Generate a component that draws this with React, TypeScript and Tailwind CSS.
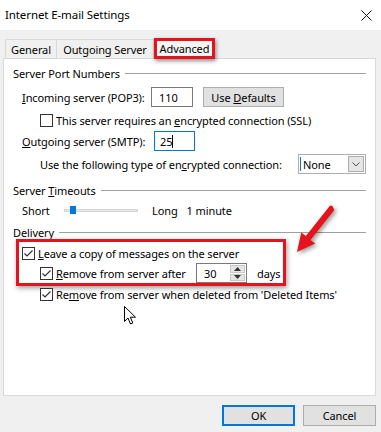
import React from 'react';

const font = { fontFamily: '"Noto Sans", "Liberation Sans", sans-serif' };

function Check({ checked }: { checked?: boolean }) {
  return (
    <span className="w-[13px] h-[13px] border border-[#333] bg-white flex items-center justify-center shrink-0">
      {checked && (
        <svg width="11" height="11" viewBox="0 0 11 11">
          <path d="M1.5 5.5 L4 8 L9.5 2.5" fill="none" stroke="#333" strokeWidth="1.2" />
        </svg>
      )}
    </span>
  );
}

function GroupHeading({ children }: { children: React.ReactNode }) {
  return (
    <div className="flex items-center h-[16px] pl-[9px] pr-[9px]">
      <span className="whitespace-nowrap">{children}</span>
      <div className="flex-1 h-px bg-[#a0a0a0] ml-[5px]" />
    </div>
  );
}

export default function App() {
  return (
    <div className="w-[381px] h-[432px] overflow-hidden relative text-[11px] tracking-[-0.1px] whitespace-nowrap text-black leading-none" style={font}>
      {/* ── Title bar ── */}
      <div className="h-[30px] bg-white flex items-center justify-between pl-[5px] pr-[9px]">
        <span className="text-[11.5px]">Internet E-mail Settings</span>
        <svg width="11" height="11" viewBox="0 0 11 11">
          <path d="M0.5 0.5 L10.5 10.5 M10.5 0.5 L0.5 10.5" stroke="#111" strokeWidth="1" />
        </svg>
      </div>

      <div className="h-[402px] bg-[#f0f0f0] flex flex-col">
        {/* ── Tabs ── */}
        <div className="flex items-end pl-[5px] h-[28px]">
          <div className="h-[19px] w-[52px] border border-b-0 border-[#d9d9d9] flex items-center justify-center">General</div>
          <div className="h-[19px] w-[97px] border border-b-0 border-l-0 border-[#d9d9d9] flex items-center justify-center">Outgoing Server</div>
          <div className="h-[21px] w-[61px] -mb-px border-[3px] border-[#e5141c] bg-[#f4f4f4] flex items-center justify-center shadow-[1px_2px_4px_rgba(0,0,0,0.45)] z-10">
            Advanced
          </div>
        </div>

        {/* ── Panel ── */}
        <div className="ml-[3px] w-[373px] h-[338px] border border-[#d9d9d9] bg-white flex flex-col">
          <div className="mt-[6px]">
            <GroupHeading>Server Port Numbers</GroupHeading>
          </div>

          <div className="mt-[6px] h-[20px] flex items-center pl-[18px]">
            <span className="w-[129px]"><u>I</u>ncoming server (POP3):</span>
            <div className="w-[42px] h-[20px] border border-[#7a7a7a] flex items-center pl-[7px]">110</div>
            <div className="ml-[10px] w-[81px] h-[20px] border border-[#adadad] bg-[#e1e1e1] flex items-center justify-center">
              Use&nbsp;<u>D</u>efaults
            </div>
          </div>

          <div className="mt-[7px] h-[13px] flex items-center pl-[36px]">
            <Check />
            <span className="ml-[3px]">This server requires an <u>e</u>ncrypted connection (SSL)</span>
          </div>

          <div className="mt-[4px] h-[20px] flex items-center pl-[18px]">
            <span className="w-[132px]"><u>O</u>utgoing server (SMTP):</span>
            <div className="w-[41px] h-[20px] border border-[#0078d7] flex items-center pl-[5px]">
              25<span className="w-px h-[13px] bg-black" />
            </div>
          </div>

          <div className="mt-[3px] h-[20px] flex items-center pl-[36px]">
            <span className="w-[258px]">Use the following type of en<u>c</u>rypted connection:</span>
            <div className="w-[68px] h-[20px] border border-[#adadad] flex items-center pl-[1px] pr-[1px]">
              <span className="w-px h-[14px] bg-[#0078d7]" />
              <span className="ml-[2px] flex-1">None</span>
              <div className="w-[16px] h-[16px] bg-[#e5e5e5] border border-[#adadad] flex items-center justify-center">
                <svg width="8" height="5" viewBox="0 0 8 5">
                  <path d="M0.5 0.5 L4 4 L7.5 0.5" fill="none" stroke="#555" strokeWidth="1" />
                </svg>
              </div>
            </div>
          </div>

          <div className="mt-[8px]">
            <GroupHeading>Server <u>T</u>imeouts</GroupHeading>
          </div>

          <div className="mt-[4px] h-[16px] flex items-center pl-[18px]">
            <span className="w-[42px]">Short</span>
            <div className="relative w-[74px] h-[3px] bg-[#e7e7e7] border border-[#d6d6d6]">
              <span className="absolute left-[5px] -top-[4px] w-[6px] h-[8px] bg-[#0078d7]" />
            </div>
            <span className="ml-[14px]">Long</span>
            <span className="ml-[9px]">1 minute</span>
          </div>

          <div className="mt-[6px] h-[15px]">
            <GroupHeading>Delivery</GroupHeading>
          </div>

          {/* red annotation box */}
          <div className="ml-[12px] w-[270px] h-[47px] border-[3px] border-[#e5141c] shadow-[1px_2px_5px_rgba(0,0,0,0.4)] flex flex-col">
            <div className="mt-[5px] h-[13px] flex items-center pl-[3px]">
              <Check checked />
              <span className="ml-[3px]"><u>L</u>eave a copy of messages on the server</span>
            </div>
            <div className="mt-[3px] h-[20px] flex items-center pl-[21px]">
              <Check checked />
              <span className="ml-[3px] w-[140px]"><u>R</u>emove from server after</span>
              <div className="w-[51px] h-[20px] border border-[#7a7a7a] flex items-center">
                <span className="flex-1 pl-[7px]">30</span>
                <div className="w-[15px] h-[16px] mr-[1px] flex flex-col gap-px">
                  <div className="flex-1 bg-[#e5e5e5] border border-[#c8c8c8] flex items-center justify-center">
                    <svg width="7" height="4" viewBox="0 0 7 4"><path d="M0 4 L3.5 0 L7 4 Z" fill="#333" /></svg>
                  </div>
                  <div className="flex-1 bg-[#e5e5e5] border border-[#c8c8c8] flex items-center justify-center">
                    <svg width="7" height="4" viewBox="0 0 7 4"><path d="M0 0 L3.5 4 L7 0 Z" fill="#333" /></svg>
                  </div>
                </div>
              </div>
              <span className="ml-[10px]">days</span>
            </div>
          </div>

          <div className="mt-[2px] h-[13px] flex items-center pl-[36px]">
            <Check checked />
            <span className="ml-[3px]">Re<u>m</u>ove from server when deleted from 'Deleted Items'</span>
          </div>
        </div>

        {/* ── Buttons ── */}
        <div className="mt-[9px] flex justify-end gap-[8px] pr-[5px]">
          <div className="w-[73px] h-[21px] border-2 border-[#0078d7] bg-[#e1e1e1] flex items-center justify-center">OK</div>
          <div className="w-[73px] h-[21px] border border-[#adadad] bg-[#e1e1e1] flex items-center justify-center">Cancel</div>
        </div>
      </div>

      {/* annotation arrow */}
      <svg className="absolute left-[290px] top-[200px]" width="50" height="60" viewBox="290 200 50 60"
        style={{ filter: 'drop-shadow(2px 2px 2px rgba(0,0,0,0.4))' }}>
        <path
          d="M334.3 209.9 L310.5 239.9 L315.2 243.6 L297 252 L301.2 232.4 L305.9 236.1 L329.7 206.1 Q332 204 334.3 209.9 Z"
          fill="#e5141c"
        />
      </svg>

      {/* mouse cursor */}
      <svg className="absolute left-[124px] top-[306px]" width="13" height="20" viewBox="0 0 13 20">
        <path d="M0.5 0.5 L0.5 15.5 L4 12 L6.5 18 L8.8 17 L6.3 11.2 L11.5 11.2 Z" fill="#fff" stroke="#000" strokeWidth="1" />
      </svg>
    </div>
  );
}
